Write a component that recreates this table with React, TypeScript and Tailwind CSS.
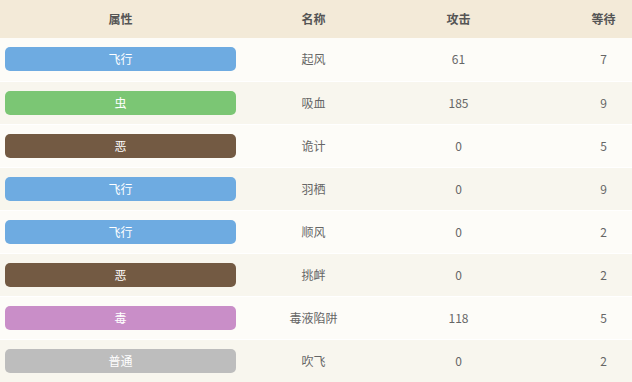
interface Move {
  type: string;
  name: string;
  power: number;
  wait: number;
}

const typeColor: Record<string, string> = {
  飞行: "bg-[#6eabe1]",
  虫: "bg-[#7bc674]",
  恶: "bg-[#735a43]",
  毒: "bg-[#c98ec8]",
  普通: "bg-[#bdbdbd]",
};

const moves: Move[] = [
  { type: "飞行", name: "起风", power: 61, wait: 7 },
  { type: "虫", name: "吸血", power: 185, wait: 9 },
  { type: "恶", name: "诡计", power: 0, wait: 5 },
  { type: "飞行", name: "羽栖", power: 0, wait: 9 },
  { type: "飞行", name: "顺风", power: 0, wait: 2 },
  { type: "恶", name: "挑衅", power: 0, wait: 2 },
  { type: "毒", name: "毒液陷阱", power: 118, wait: 5 },
  { type: "普通", name: "吹飞", power: 0, wait: 2 },
];

export default function App() {
  return (
    <div
      className="w-[632px] h-[382px] overflow-hidden bg-[#f8f6ee] text-[12px] text-[#666]"
      style={{ fontFamily: '"Noto Sans CJK SC", "Noto Sans", sans-serif' }}
    >
      <table className="w-[676px] table-fixed border-collapse">
        <thead className="bg-[#f3ead8] text-[#555]">
          <tr className="h-[38px]">
            <th className="w-[241px] font-bold">属性</th>
            <th className="w-[145px] font-bold">名称</th>
            <th className="w-[145px] font-bold">攻击</th>
            <th className="w-[145px] font-bold">等待</th>
          </tr>
        </thead>
        <tbody>
          {moves.map((m, i) => (
            <tr
              key={i}
              className={
                "h-[43px] border-b border-white " +
                (i % 2 === 0 ? "bg-[#fdfcf8]" : "bg-[#f8f6ee]")
              }
            >
              <td className="px-[5px]">
                <div
                  className={
                    "h-6 rounded-[5px] flex items-center justify-center text-white " +
                    typeColor[m.type]
                  }
                >
                  {m.type}
                </div>
              </td>
              <td className="text-center">{m.name}</td>
              <td className="text-center">{m.power}</td>
              <td className="text-center">{m.wait}</td>
            </tr>
          ))}
        </tbody>
      </table>
    </div>
  );
}
